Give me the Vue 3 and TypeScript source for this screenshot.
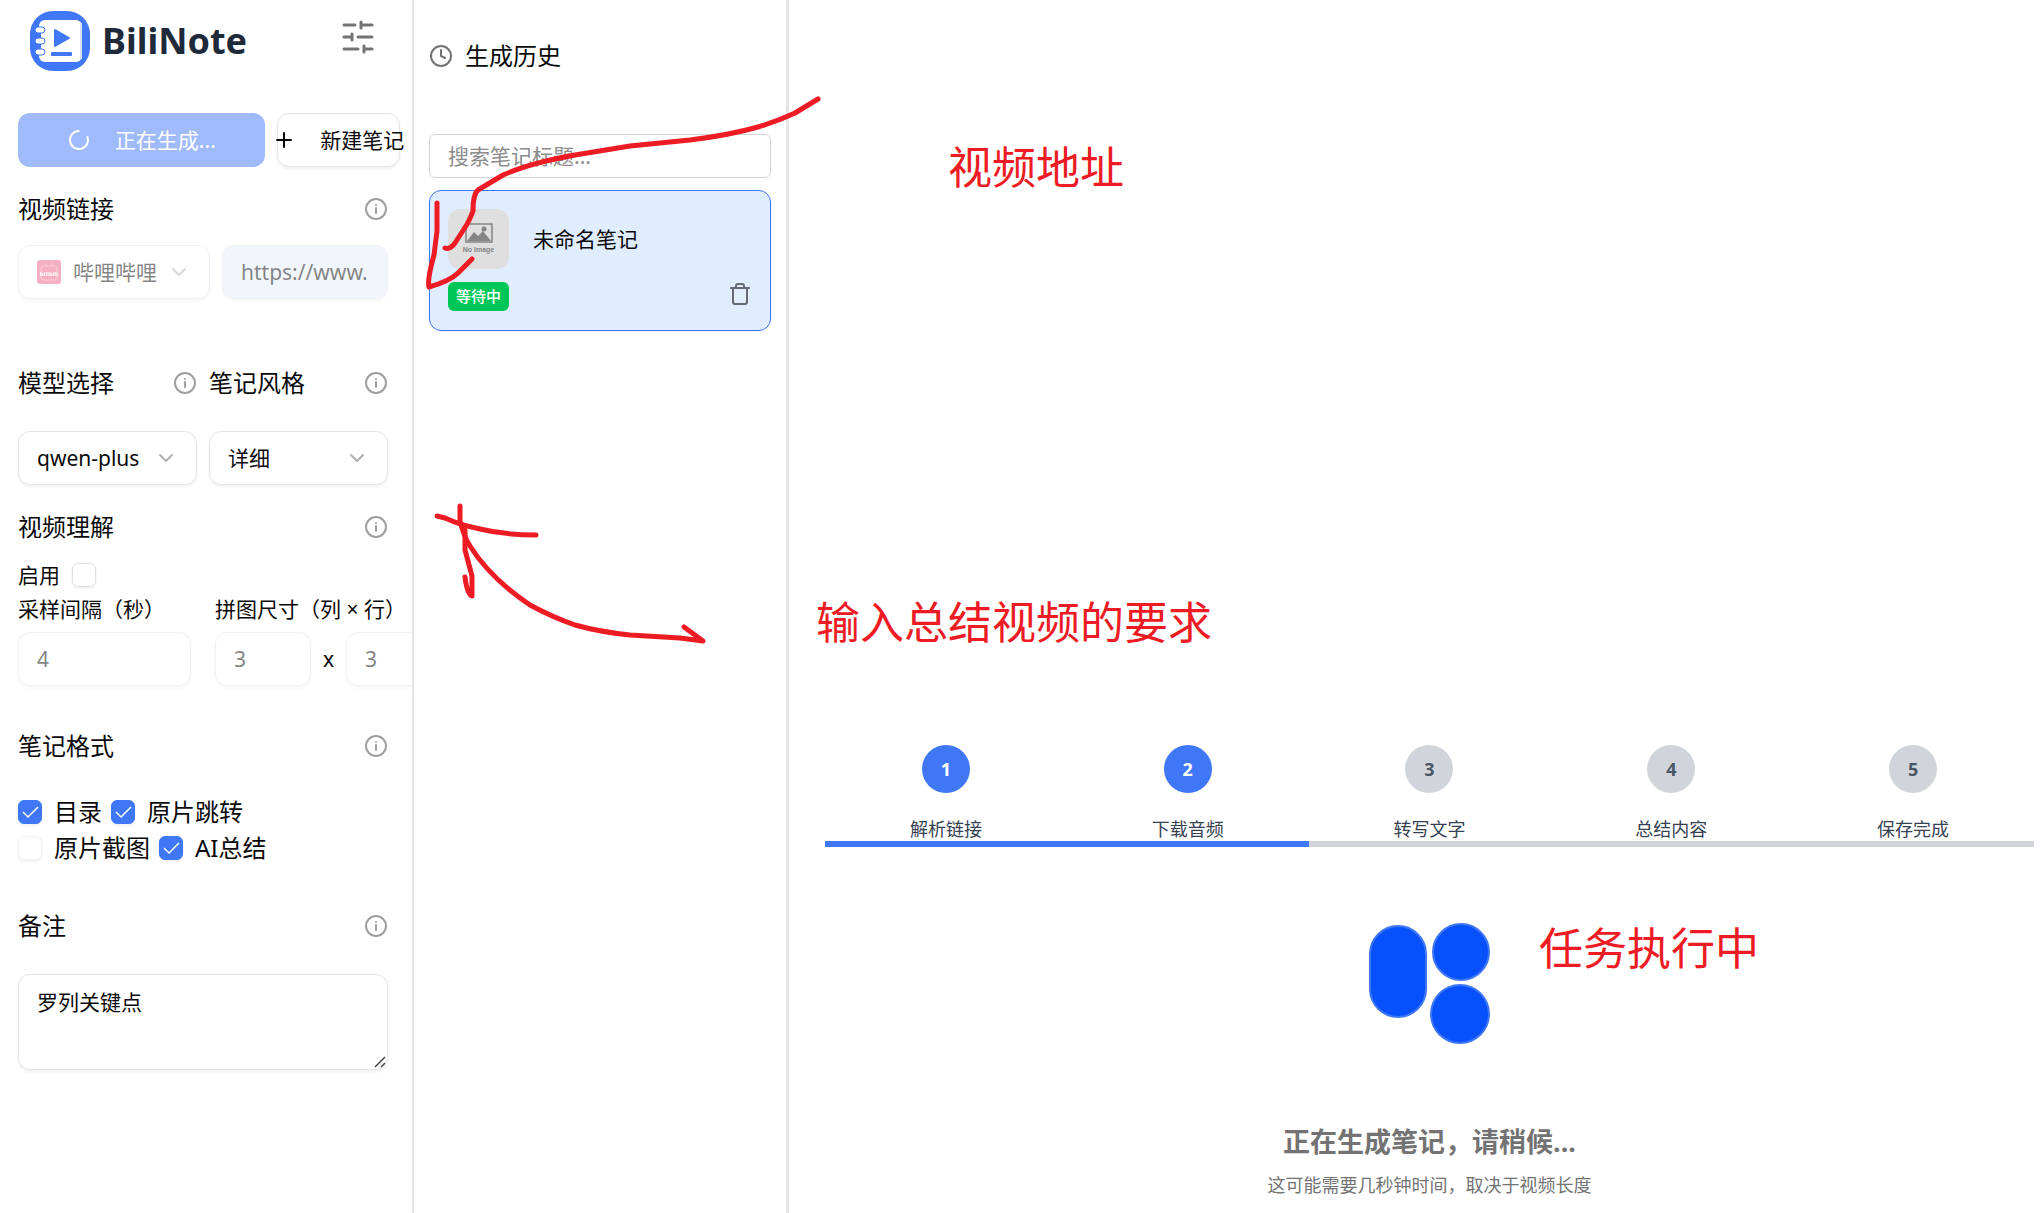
<script setup lang="ts">
import { ref } from 'vue'

interface Format {
  id: string
  label: string
  checked: boolean
}

interface Step {
  label: string
  done: boolean
}

const platform = ref('哔哩哔哩')
const url = ref('https://www.')
const model = ref('qwen-plus')
const noteStyle = ref('详细')
const videoEnabled = ref(false)
const interval = ref('4')
const gridCols = ref('3')
const gridRows = ref('3')
const remark = ref('罗列关键点')
const search = ref('')

const formatRows = ref<Format[][]>([
  [
    { id: 'toc', label: '目录', checked: true },
    { id: 'link', label: '原片跳转', checked: true },
  ],
  [
    { id: 'screenshot', label: '原片截图', checked: false },
    { id: 'summary', label: 'AI总结', checked: true },
  ],
])

const steps: Step[] = [
  { label: '解析链接', done: true },
  { label: '下载音频', done: true },
  { label: '转写文字', done: false },
  { label: '总结内容', done: false },
  { label: '保存完成', done: false },
]
</script>

<template>
  <div class="app">
    <aside class="panel form-panel">
      <header class="brand">
        <svg class="logo" viewBox="0 0 60 60" aria-hidden="true">
          <rect width="60" height="60" rx="23" fill="#3f77f6" />
          <rect x="9" y="9" width="43" height="42" rx="6" fill="#fff" />
          <rect x="50" y="12" width="2" height="36" fill="#d5e1fd" />
          <path d="M8 22h3v5H8zM8 33h3v5H8z" fill="#3f77f6" />
          <g fill="#fff" stroke="#3f77f6" stroke-width="1">
            <rect x="5" y="16" width="10" height="6" rx="3" />
            <rect x="5" y="27" width="10" height="6" rx="3" />
            <rect x="5" y="38" width="10" height="6" rx="3" />
          </g>
          <path d="M25 19v16l14-8z" fill="#3f77f6" stroke="#3f77f6" stroke-width="2" stroke-linejoin="round" />
          <rect x="21" y="41" width="21" height="4" rx="1" fill="#3f77f6" />
        </svg>
        <h1>BiliNote</h1>
        <button class="icon-button settings" type="button" aria-label="设置">
          <svg viewBox="0 0 32 34" width="32" height="34" fill="none" stroke="#737373" stroke-width="3" stroke-linecap="round">
            <path d="M2 5h11M19 2v6M19 5h11M2 17h8M10 14v6M16 17h14M2 29h14M22 26v6M22 29h8" />
          </svg>
        </button>
      </header>

      <div class="actions">
        <button class="button primary" type="button" disabled>
          <svg viewBox="0 0 24 24" class="glyph" fill="none" stroke="currentColor" stroke-width="2" stroke-linecap="round">
            <path d="M21 12a9 9 0 1 1-6.219-8.56" transform="rotate(-20 12 12)" />
          </svg>
          <span>正在生成...</span>
        </button>
        <button class="button outline" type="button">
          <svg viewBox="0 0 24 24" class="glyph" fill="none" stroke="currentColor" stroke-width="2" stroke-linecap="round">
            <path d="M5 12h14M12 5v14" />
          </svg>
          <span>新建笔记</span>
        </button>
      </div>

      <section class="field tight">
        <div class="label-row">
          <label for="url">视频链接</label>
          <svg class="info" viewBox="0 0 24 24"><circle cx="12" cy="12" r="10" /><path d="M12 16v-5M12 8v0" /></svg>
        </div>
        <div class="link-row">
          <div class="select-box disabled">
            <svg class="bili" viewBox="0 0 24 24" aria-hidden="true">
              <rect width="24" height="24" rx="3" fill="#ee6088" />
              <path d="M8 3l2 3M16 3l-2 3" stroke="#f59ab3" stroke-width="1" />
              <rect x="4" y="6" width="16" height="14" rx="3" fill="none" stroke="#f59ab3" stroke-width="1" />
              <text x="12" y="16" text-anchor="middle" font-size="6" font-weight="700" fill="#fff">bilibili</text>
            </svg>
            <select v-model="platform" class="control with-icon" aria-label="平台" disabled>
              <option>哔哩哔哩</option>
            </select>
            <svg class="chevron" viewBox="0 0 24 24"><path d="m6 9 6 6 6-6" /></svg>
          </div>
          <input id="url" v-model="url" class="control url" type="text" disabled />
        </div>
      </section>

      <div class="pair">
        <section class="field">
          <div class="label-row">
            <label for="model">模型选择</label>
            <svg class="info" viewBox="0 0 24 24"><circle cx="12" cy="12" r="10" /><path d="M12 16v-5M12 8v0" /></svg>
          </div>
          <div class="select-box">
            <select id="model" v-model="model" class="control">
              <option>qwen-plus</option>
            </select>
            <svg class="chevron" viewBox="0 0 24 24"><path d="m6 9 6 6 6-6" /></svg>
          </div>
        </section>
        <section class="field">
          <div class="label-row">
            <label for="style">笔记风格</label>
            <svg class="info" viewBox="0 0 24 24"><circle cx="12" cy="12" r="10" /><path d="M12 16v-5M12 8v0" /></svg>
          </div>
          <div class="select-box">
            <select id="style" v-model="noteStyle" class="control">
              <option>详细</option>
            </select>
            <svg class="chevron" viewBox="0 0 24 24"><path d="m6 9 6 6 6-6" /></svg>
          </div>
        </section>
      </div>

      <section class="field tight">
        <div class="label-row">
          <h2>视频理解</h2>
          <svg class="info" viewBox="0 0 24 24"><circle cx="12" cy="12" r="10" /><path d="M12 16v-5M12 8v0" /></svg>
        </div>
        <div class="understanding">
          <div class="enable">
            <label for="enable">启用</label>
            <span class="check"><input id="enable" v-model="videoEnabled" type="checkbox" /></span>
          </div>
          <div class="sampling">
            <div class="sub-field">
              <label for="interval">采样间隔（秒）</label>
              <input id="interval" v-model="interval" class="control" type="text" disabled />
            </div>
            <div class="sub-field">
              <label for="cols">拼图尺寸（列 × 行）</label>
              <div class="grid-size">
                <input id="cols" v-model="gridCols" class="control small" type="text" disabled />
                <span>x</span>
                <input v-model="gridRows" class="control small" type="text" aria-label="行" disabled />
              </div>
            </div>
          </div>
        </div>
      </section>

      <section class="field spaced">
        <div class="label-row">
          <h2>笔记格式</h2>
          <svg class="info" viewBox="0 0 24 24"><circle cx="12" cy="12" r="10" /><path d="M12 16v-5M12 8v0" /></svg>
        </div>
        <div>
          <div v-for="(row, i) in formatRows" :key="i" class="format-row">
            <label v-for="f in row" :key="f.id" class="format">
              <span class="check" :class="{ faded: !f.checked }">
                <input v-model="f.checked" type="checkbox" />
                <svg v-if="f.checked" viewBox="0 0 24 24" aria-hidden="true"><path d="M5 12l5 5L20 7" /></svg>
              </span>
              {{ f.label }}
            </label>
          </div>
        </div>
      </section>

      <section class="field spaced">
        <div class="label-row">
          <label for="remark">备注</label>
          <svg class="info" viewBox="0 0 24 24"><circle cx="12" cy="12" r="10" /><path d="M12 16v-5M12 8v0" /></svg>
        </div>
        <div class="textarea-box">
          <textarea id="remark" v-model="remark" class="control"></textarea>
          <svg class="grip" viewBox="0 0 12 12" aria-hidden="true"><path d="M1 11L11 1M7 11l4-4" /></svg>
        </div>
      </section>
    </aside>

    <aside class="panel history-panel">
      <header class="history-title">
        <svg class="info clock" viewBox="0 0 24 24"><circle cx="12" cy="12" r="10" /><path d="M12 6v6l4 2" /></svg>
        <h2>生成历史</h2>
      </header>
      <input v-model="search" class="search" type="text" placeholder="搜索笔记标题..." aria-label="搜索笔记标题" />
      <article class="card">
        <div class="card-top">
          <div class="thumb">
            <svg viewBox="0 0 28 20" width="28" height="20" aria-hidden="true">
              <rect x="1" y="1" width="26" height="18" fill="none" stroke="#858585" stroke-width="1.5" />
              <path d="M2 18l7-9 4 4 5-5 8 10z" fill="#858585" />
              <circle cx="19" cy="6" r="2.5" fill="#858585" />
            </svg>
            <span>No Image</span>
          </div>
          <h3>未命名笔记</h3>
        </div>
        <div class="card-bottom">
          <span class="badge">等待中</span>
          <button class="icon-button" type="button" aria-label="删除">
            <svg viewBox="0 0 24 24" width="24" height="24" fill="none" stroke="#666b73" stroke-width="2" stroke-linecap="round" stroke-linejoin="round">
              <path d="M3 6h18M19 6v14c0 1-1 2-2 2H7c-1 0-2-1-2-2V6M8 6V4c0-1 1-2 2-2h4c1 0 2 1 2 2v2" />
            </svg>
          </button>
        </div>
      </article>
    </aside>

    <main class="progress-panel">
      <ol class="steps">
        <li v-for="(step, i) in steps" :key="step.label" :class="{ done: step.done }">
          <span class="dot">{{ i + 1 }}</span>
          <span class="step-label">{{ step.label }}</span>
        </li>
      </ol>
      <svg class="loader" viewBox="0 0 124 124" aria-hidden="true">
        <g fill="#0850fb" stroke="#3f77f6" stroke-width="2">
          <rect x="2" y="5" width="56" height="91" rx="28" />
          <ellipse cx="93" cy="31" rx="28" ry="28" />
          <circle cx="92" cy="93" r="29" />
        </g>
      </svg>
      <h2 class="status">正在生成笔记，请稍候...</h2>
      <p class="hint">这可能需要几秒钟时间，取决于视频长度</p>
    </main>

    <svg class="ink" width="830" height="660" aria-hidden="true">
      <g fill="none" stroke="#ed1c24" stroke-width="5" stroke-linecap="round" stroke-linejoin="round">
        <path d="M818 99L795 113Q778 121 758 127Q730 135 690 140L630 146L575 155Q530 163 503 175L478 190Q473 194 473 211Q469 222 464 229L455 243Q450 250 445 248" />
        <path d="M437 203V231L434 255Q427 280 429 287Q450 281 458 273L472 259" />
        <path d="M437 516L445 518Q460 525 480 529Q505 535 536 535" />
        <path d="M460 506V521Q464 537 470 546Q490 578 530 605Q552 617 575 625Q600 632 630 635L680 638L703 641L684 627" />
        <path d="M465 530V550L472 576V596Q467 594 465 577" />
      </g>
    </svg>
    <p class="note note-address">视频地址</p>
    <p class="note note-prompt">输入总结视频的要求</p>
    <p class="note note-running">任务执行中</p>
  </div>
</template>

<style>
body {
  margin: 0;
  background: #fff;
}
</style>

<style scoped>
* {
  box-sizing: border-box;
}

.app {
  position: relative;
  display: grid;
  grid-template-columns: 414fr 375fr 1253fr;
  min-height: 100vh;
  overflow: hidden;
  background: #fff;
  color: #0a0a0a;
  font-family: 'Noto Sans', 'Noto Sans CJK SC', sans-serif;
  font-size: 21px;
  line-height: 30px;
}

h1, h2, h3, p, ol {
  margin: 0;
  padding: 0;
}

button, input, select, textarea {
  font: inherit;
  color: inherit;
}

.panel {
  min-width: 0;
  overflow: hidden;
}

.form-panel {
  border-right: 2px solid #e5e5e5;
  padding: 11px 24px 24px 18px;
}

.brand {
  display: flex;
  align-items: center;
  gap: 12px;
  height: 60px;
  padding-left: 12px;
}

.logo {
  width: 60px;
  height: 60px;
}

.brand h1 {
  font-size: 36px;
  line-height: 48px;
  font-weight: 700;
  color: #1e2939;
}

.icon-button {
  display: flex;
  padding: 0;
  border: 0;
  background: none;
}

.settings {
  margin: 0 14px 8px auto;
}

.actions {
  display: grid;
  grid-template-columns: 2fr 1fr;
  gap: 12px;
  margin: 42px -12px 24px 0;
}

.button {
  display: flex;
  align-items: center;
  justify-content: center;
  gap: 24px;
  min-width: 0;
  height: 54px;
  padding: 0;
  border: 0;
  border-radius: 12px;
  white-space: nowrap;
}

.primary {
  background: #9fbbfb;
  color: #fff;
}

.outline {
  border: 1px solid #e5e5e5;
  background: #fff;
  box-shadow: 0 2px 3px rgba(0, 0, 0, 0.06);
}

.glyph {
  flex: none;
  width: 24px;
  height: 24px;
}

.label-row {
  display: flex;
  align-items: center;
  justify-content: space-between;
  height: 36px;
  font-size: 24px;
  line-height: 36px;
}

.label-row h2, .history-title h2 {
  font-size: 24px;
  font-weight: 400;
  line-height: 36px;
}

.info {
  width: 24px;
  height: 24px;
  fill: none;
  stroke: #9f9f9f;
  stroke-width: 2;
  stroke-linecap: round;
  stroke-linejoin: round;
}

.field {
  display: grid;
  gap: 30px;
}

.tight {
  gap: 18px;
}

.spaced {
  margin-top: 42px;
}

.control {
  display: block;
  width: 100%;
  height: 54px;
  padding: 0 18px;
  border: 1px solid #e5e5e5;
  border-radius: 12px;
  background: #fff;
  box-shadow: 0 2px 3px rgba(0, 0, 0, 0.06);
  appearance: none;
  outline: 0;
  opacity: 1;
}

.control:disabled {
  opacity: 0.5;
}

.control.url {
  background: #e5effd;
}

.link-row {
  display: grid;
  grid-template-columns: 192px 1fr;
  gap: 12px;
}

.select-box {
  display: grid;
  align-items: center;
}

.select-box > * {
  grid-area: 1 / 1;
}

.with-icon {
  padding-left: 54px;
}

.chevron {
  z-index: 1;
  justify-self: end;
  width: 24px;
  height: 24px;
  margin-right: 19px;
  fill: none;
  stroke: #b0b0b0;
  stroke-width: 2;
  stroke-linecap: round;
  stroke-linejoin: round;
  pointer-events: none;
}

.disabled .chevron {
  stroke: #d8d8d8;
}

.bili {
  z-index: 1;
  width: 24px;
  height: 24px;
  margin-left: 19px;
  opacity: 0.5;
}

.pair {
  display: grid;
  grid-template-columns: 1fr 1fr;
  gap: 12px;
  margin: 66px 0 24px;
}

.understanding {
  display: grid;
  gap: 6px;
}

.enable {
  display: flex;
  align-items: center;
  gap: 12px;
  height: 24px;
}

.check {
  display: grid;
  width: 24px;
  height: 24px;
}

.check > * {
  grid-area: 1 / 1;
}

.check input {
  width: 24px;
  height: 24px;
  margin: 0;
  appearance: none;
  border: 1px solid #e0e0e0;
  border-radius: 6px;
  background: #fff;
  box-shadow: 0 2px 3px rgba(0, 0, 0, 0.06);
}

.check.faded input {
  border-color: #f0f0f0;
}

.check input:checked {
  border-color: #3f77f6;
  background: #3f77f6;
}

.check svg {
  z-index: 1;
  fill: none;
  stroke: #fff;
  stroke-width: 1.5;
  pointer-events: none;
}

.sampling {
  display: grid;
  grid-template-columns: 173px 1fr;
  gap: 24px;
}

.sub-field {
  display: grid;
  gap: 6px;
  min-width: 0;
  line-height: 33px;
  white-space: nowrap;
}

.grid-size {
  display: flex;
  align-items: center;
  gap: 12px;
}

.small {
  flex: none;
  width: 96px;
}

.format-row {
  display: flex;
  gap: 9px;
}

.format {
  display: flex;
  align-items: center;
  gap: 12px;
  font-size: 24px;
  line-height: 36px;
}

.textarea-box {
  position: relative;
}

textarea.control {
  height: 96px;
  padding: 12px 18px;
  resize: none;
}

.grip {
  position: absolute;
  right: 2px;
  bottom: 2px;
  width: 12px;
  height: 12px;
  fill: none;
  stroke: #444;
  stroke-width: 1.5;
}

.history-panel {
  border-right: 3px solid #e5e5e5;
  padding: 38px 15px 24px;
}

.history-title {
  display: flex;
  align-items: center;
  gap: 12px;
}

.clock {
  stroke: #737373;
}

.search {
  display: block;
  width: 100%;
  height: 44px;
  margin: 60px 0 12px;
  padding: 0 18px;
  border: 1px solid #d4d4d4;
  border-radius: 6px;
  outline: 0;
}

.search::placeholder {
  color: #8c8c8c;
}

.card {
  height: 141px;
  padding: 18px;
  border: 1px solid #3f77f6;
  border-radius: 12px;
  background: #e0edff;
}

.card-top {
  display: flex;
  align-items: center;
  gap: 24px;
}

.card-top h3 {
  font-size: 21px;
  font-weight: 400;
}

.thumb {
  display: flex;
  flex-direction: column;
  align-items: center;
  justify-content: center;
  gap: 2px;
  width: 61px;
  height: 60px;
  border-radius: 12px;
  background: #dfdfdf;
  color: #858585;
  font: 700 7px/10px 'Liberation Sans', sans-serif;
}

.card-bottom {
  display: flex;
  align-items: flex-start;
  justify-content: space-between;
  height: 29px;
  margin-top: 13px;
}

.badge {
  padding: 0 8px;
  border-radius: 6px;
  background: #00c758;
  color: #fff;
  font-size: 15px;
  font-weight: 500;
  line-height: 29px;
}

.progress-panel {
  display: flex;
  flex-direction: column;
  align-items: center;
  min-width: 0;
  padding: 745px 8px 0 36px;
}

.steps {
  display: grid;
  grid-template-columns: repeat(5, 1fr);
  width: 100%;
  list-style: none;
}

.steps li {
  display: flex;
  flex-direction: column;
  align-items: center;
  gap: 24px;
  border-bottom: 6px solid #d1d5db;
}

.steps li.done {
  border-color: #3f77f6;
}

.dot {
  display: grid;
  place-items: center;
  width: 48px;
  height: 48px;
  border-radius: 50%;
  background: #d1d5db;
  color: #4a5565;
  font-size: 18px;
  font-weight: 700;
}

.done .dot {
  background: #3f77f6;
  color: #fff;
}

.step-label {
  color: #364153;
  font-size: 18px;
  line-height: 24px;
}

.loader {
  width: 124px;
  height: 124px;
  margin: 74px 0 76px;
}

.status {
  color: #737373;
  font-size: 27px;
  font-weight: 700;
  line-height: 42px;
}

.hint {
  margin-top: 9px;
  color: #737373;
  font-size: 18px;
  line-height: 27px;
}

.ink {
  position: absolute;
  top: 0;
  left: 0;
  z-index: 2;
  pointer-events: none;
}

.note {
  position: absolute;
  z-index: 2;
  color: #ed1c24;
  font-family: KaiTi, STKaiti, 'Noto Sans CJK SC', sans-serif;
  font-size: 44px;
  line-height: 60px;
  white-space: nowrap;
}

.note-address {
  top: 135px;
  left: 948px;
}

.note-prompt {
  top: 590px;
  left: 816px;
}

.note-running {
  top: 916px;
  left: 1539px;
}
</style>
